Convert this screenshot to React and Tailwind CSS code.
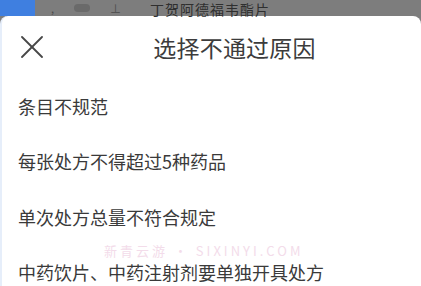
const REASONS = [
  '条目不规范',
  '每张处方不得超过5种药品',
  '单次处方总量不符合规定',
  '中药饮片、中药注射剂要单独开具处方',
]

function CloseIcon() {
  return (
    <svg width="24" height="22" viewBox="0 0 24 22" fill="none" stroke="#474747" strokeWidth="1.8" strokeLinecap="round">
      <line x1="2" y1="1" x2="22" y2="21" />
      <line x1="22" y1="1" x2="2" y2="21" />
    </svg>
  )
}

export default function App() {
  return (
    <div className="w-[421px] h-[286px] overflow-hidden bg-[#7d7d7d] relative" style={{ fontFamily: '"Noto Sans CJK SC", "Noto Sans", sans-serif' }}>
      {/* Dimmed page behind the sheet */}
      <div className="h-4 flex items-start">
        <div className="w-[35px] h-4 bg-[#3f7fe0]" />
        <div className="flex items-center gap-5 pl-4 h-4 text-[#4a4a4a] text-[11px] leading-none">
          <span>,</span>
          <span className="w-4 h-2 rounded-full bg-[#6a6a6a]" />
          <span>⊥</span>
        </div>
        <div className="ml-[29px] pt-[2px] text-[14px] leading-[14px] text-[#2f2f2f] tracking-[1px]">丁贺阿德福韦酯片</div>
      </div>

      {/* Bottom sheet */}
      <div className="bg-white rounded-t-lg h-[270px] border-l-2 border-[#e6eefa]">
        <div className="flex items-center h-[62px] pl-[18px]">
          <CloseIcon />
          <div className="flex-1 text-center text-[23px] text-[#3c3c3c] pl-[4px] tracking-[0.2px]">选择不通过原因</div>
        </div>
        <div className="flex flex-col">
          {REASONS.map((r) => (
            <div key={r} className="h-[55.5px] flex items-center pl-4 text-[18px] leading-[20px] text-[#3a3a3a]">{r}</div>
          ))}
        </div>
      </div>

      <div className="absolute left-[104px] top-[243px] text-[13px] leading-[15px] text-[#f3dcea] tracking-[3px] pointer-events-none">新青云游 · SIXINYI.COM</div>
    </div>
  )
}
